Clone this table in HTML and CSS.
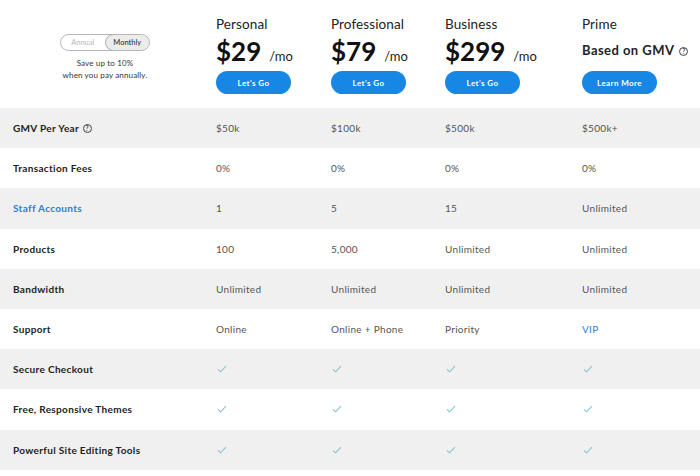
FILE: index.html
```html
<!DOCTYPE html>
<html>
<head>
<meta charset="utf-8">
<link rel="stylesheet" href="styles.css">
</head>
<body>
<div class="page">
  <div class="head">
    <div class="toggle-cell">
      <div class="toggle">
        <span class="opt">Annual</span>
        <span class="opt active">Monthly</span>
      </div>
      <p class="save">Save up to 10%<br>when you pay annually.</p>
    </div>
    <div class="plan">
      <div class="pname">Personal</div>
      <div class="price"><span class="amt">$29</span><span class="per">/mo</span></div>
      <a class="btn">Let's Go</a>
    </div>
    <div class="plan">
      <div class="pname">Professional</div>
      <div class="price"><span class="amt">$79</span><span class="per">/mo</span></div>
      <a class="btn">Let's Go</a>
    </div>
    <div class="plan">
      <div class="pname">Business</div>
      <div class="price"><span class="amt">$299</span><span class="per">/mo</span></div>
      <a class="btn">Let's Go</a>
    </div>
    <div class="plan">
      <div class="pname">Prime</div>
      <div class="price"><span class="gmv">Based on GMV</span><span class="q big">?</span></div>
      <a class="btn">Learn More</a>
    </div>
  </div>

  <div class="row gray">
    <div class="label">GMV Per Year <span class="q">?</span></div>
    <div class="val">$50k</div><div class="val">$100k</div><div class="val">$500k</div><div class="val">$500k+</div>
  </div>
  <div class="row">
    <div class="label">Transaction Fees</div>
    <div class="val">0%</div><div class="val">0%</div><div class="val">0%</div><div class="val">0%</div>
  </div>
  <div class="row gray">
    <div class="label link">Staff Accounts</div>
    <div class="val">1</div><div class="val">5</div><div class="val">15</div><div class="val">Unlimited</div>
  </div>
  <div class="row">
    <div class="label">Products</div>
    <div class="val">100</div><div class="val">5,000</div><div class="val">Unlimited</div><div class="val">Unlimited</div>
  </div>
  <div class="row gray">
    <div class="label">Bandwidth</div>
    <div class="val">Unlimited</div><div class="val">Unlimited</div><div class="val">Unlimited</div><div class="val">Unlimited</div>
  </div>
  <div class="row">
    <div class="label">Support</div>
    <div class="val">Online</div><div class="val">Online + Phone</div><div class="val">Priority</div><div class="val link">VIP</div>
  </div>
  <div class="row gray">
    <div class="label">Secure Checkout</div>
    <div class="val"><svg class="chk" viewBox="0 0 12 10"><path d="M1 5.5 L4.2 8.5 L11 1.5"/></svg></div>
    <div class="val"><svg class="chk" viewBox="0 0 12 10"><path d="M1 5.5 L4.2 8.5 L11 1.5"/></svg></div>
    <div class="val"><svg class="chk" viewBox="0 0 12 10"><path d="M1 5.5 L4.2 8.5 L11 1.5"/></svg></div>
    <div class="val"><svg class="chk" viewBox="0 0 12 10"><path d="M1 5.5 L4.2 8.5 L11 1.5"/></svg></div>
  </div>
  <div class="row">
    <div class="label">Free, Responsive Themes</div>
    <div class="val"><svg class="chk" viewBox="0 0 12 10"><path d="M1 5.5 L4.2 8.5 L11 1.5"/></svg></div>
    <div class="val"><svg class="chk" viewBox="0 0 12 10"><path d="M1 5.5 L4.2 8.5 L11 1.5"/></svg></div>
    <div class="val"><svg class="chk" viewBox="0 0 12 10"><path d="M1 5.5 L4.2 8.5 L11 1.5"/></svg></div>
    <div class="val"><svg class="chk" viewBox="0 0 12 10"><path d="M1 5.5 L4.2 8.5 L11 1.5"/></svg></div>
  </div>
  <div class="row gray">
    <div class="label">Powerful Site Editing Tools</div>
    <div class="val"><svg class="chk" viewBox="0 0 12 10"><path d="M1 5.5 L4.2 8.5 L11 1.5"/></svg></div>
    <div class="val"><svg class="chk" viewBox="0 0 12 10"><path d="M1 5.5 L4.2 8.5 L11 1.5"/></svg></div>
    <div class="val"><svg class="chk" viewBox="0 0 12 10"><path d="M1 5.5 L4.2 8.5 L11 1.5"/></svg></div>
    <div class="val"><svg class="chk" viewBox="0 0 12 10"><path d="M1 5.5 L4.2 8.5 L11 1.5"/></svg></div>
  </div>
</div>
</body>
</html>
```

FILE: styles.css
```css
* { box-sizing: border-box; }
html, body { margin: 0; padding: 0; background: #fff; }
body { font-family: "Lato", "Noto Sans", sans-serif; color: #222; }
.page { width: 700px; }

.head {
  display: grid;
  grid-template-columns: 216px 115px 114px 137px 118px;
  height: 108px;
}
.toggle-cell {
  display: flex;
  flex-direction: column;
  align-items: center;
  padding: 34px 6px 0 0;
}
.toggle {
  display: flex;
  width: 90px;
  height: 17px;
  border: 1px solid #b5b5b5;
  border-radius: 9px;
  overflow: hidden;
  font-size: 7.5px;
}
.opt {
  flex: 1;
  display: flex;
  align-items: center;
  justify-content: center;
  color: #b8b8b8;
}
.opt.active {
  background: #ececec;
  color: #333;
  border: 1px solid #a9a9a9;
  border-radius: 9px;
  margin: -1px -1px -1px 0;
  font-weight: 500;
}
.save {
  margin: 6px 0 0;
  font-size: 8px;
  line-height: 12px;
  text-align: center;
  color: #333;
  letter-spacing: 0.15px;
}

.plan { padding-top: 15px; }
.pname { font-size: 13.5px; line-height: 18px; color: #222; letter-spacing: 0.1px; }
.price {
  display: flex;
  align-items: baseline;
  height: 30px;
  margin-top: 2px;
}
.amt { font-size: 26px; font-weight: 700; color: #111; letter-spacing: 0; }
.per { font-size: 13px; margin-left: 8px; color: #222; }
.gmv { font-size: 13px; font-weight: 700; color: #222; align-self: center; letter-spacing: 0.45px; }
.btn {
  display: flex;
  align-items: center;
  justify-content: center;
  width: 75px;
  height: 23px;
  margin-top: 6px;
  border-radius: 12px;
  background: #1687e4;
  color: #fff;
  font-size: 8px;
  font-weight: 700;
  letter-spacing: 0.4px;
}

.q {
  display: inline-flex;
  align-items: center;
  justify-content: center;
  width: 9px;
  height: 9px;
  border: 1px solid #444;
  border-radius: 50%;
  font-size: 6.5px;
  font-weight: 700;
  color: #444;
  vertical-align: 1px;
  margin-left: 1px;
  letter-spacing: 0;
}
.q.big { align-self: center; margin-left: 5px; margin-top: 2px; }

.row {
  display: grid;
  grid-template-columns: 216px 115px 114px 137px 118px;
  height: 40.2px;
  align-items: center;
  background: #fff;
}
.row.gray { background: #f0f0f0; }
.label {
  padding-left: 13px;
  font-size: 10px;
  font-weight: 700;
  color: #222;
  letter-spacing: 0.33px;
}
.val { font-size: 10px; color: #555; letter-spacing: 0.3px; }
.link { color: #2b7fd2; }
.chk {
  width: 10px;
  height: 8px;
  fill: none;
  stroke: #7ec3d6;
  stroke-width: 1.3;
  display: block;
  margin-left: 1px;
}
```
